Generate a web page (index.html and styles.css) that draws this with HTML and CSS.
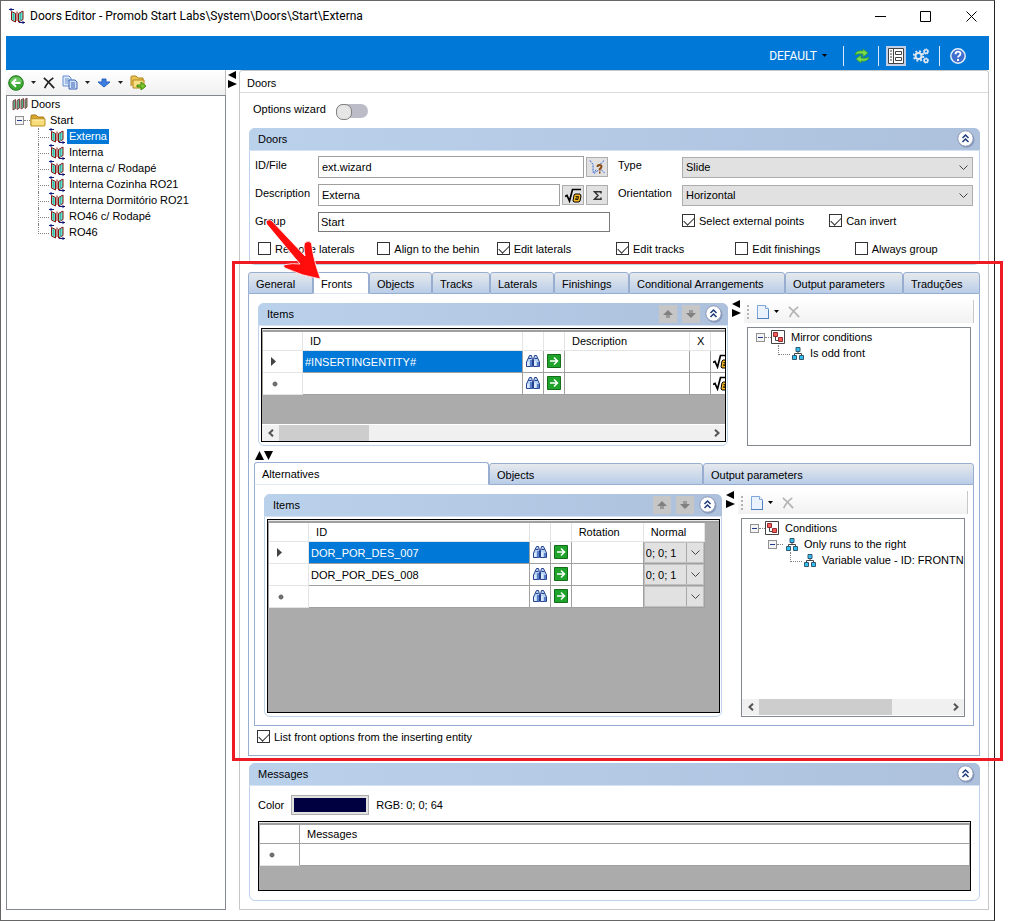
FILE: index.html
```html
<!DOCTYPE html>
<html lang="en">
<head>
<meta charset="utf-8">
<title>Doors Editor</title>
<link rel="stylesheet" href="styles.css">
</head>
<body>
<svg class="defs" aria-hidden="true">
  <symbol id="i-door" viewBox="0 0 16 16">
    <path d="M2.500 3.500l4 2v8.500l-4-2z" fill="#5fe6c0" stroke="#8c1414"/><path d="M9.500 5.500l4.500-2.500v8.500l-4.500 2.500z" fill="#5fe6c0" stroke="#8c1414"/>
    <path d="M8 3.500v9.500" stroke="#8c1414"/><path d="M4.500 5.500v7M11.500 5v8" stroke="#4aa9b8"/>
    <path d="M0 1.500h5M2 0v3M10 14.500h6M14 13v3" fill="none" stroke="#101878"/>
  </symbol>
  <symbol id="i-doors" viewBox="0 0 16 16">
    <path d="M1 5l2.500-1.500v9L1 14zM5 4.500l2.500-1.500v9L5 13.500zM9 4l2.500-1.500v9L9 13zM13 3.500l2-1.500v9l-2 1.500z" fill="#4fb090" stroke="#8a4444"/>
  </symbol>
  <symbol id="i-folder" viewBox="0 0 16 16">
    <path d="M1 13V4q0-1 1-1h4l2 2h5q1 0 1 1v2" fill="#d9a62e" stroke="#a67a14"/><path d="M1 14V6l2 1h12v6q0 1-1 1z" fill="#f7dc7a" stroke="#b98f22"/><path d="M3 8h11" stroke="#fff3b8"/>
  </symbol>
  <symbol id="i-back" viewBox="0 0 16 16">
    <circle cx="8" cy="8" r="7.300" fill="#3aa832" stroke="#1f7a1b"/><path d="M2 7a6 5 0 0 1 12 0q-6 1-12 0z" fill="#8fd980" opacity=".6"/><path d="M12.500 8H4.500M8 4.200L4.200 8 8 11.800" fill="none" stroke="#fff" stroke-width="2"/>
  </symbol>
  <symbol id="i-x" viewBox="0 0 14 14"><path d="M1 1q6 5 12 12M12 1Q5 6 2 13" fill="none" stroke="currentColor" stroke-width="2"/></symbol>
  <symbol id="i-copy" viewBox="0 0 16 16">
    <path d="M1 1h6l2 2v8H1z" fill="#dbe8fa" stroke="#6b8fd0"/><path d="M3 4h4M3 6h4M3 8h3" stroke="#6b8fd0"/><path d="M7 5h6l2 2v7H7z" fill="#cfe0f8" stroke="#3c64b4"/><path d="M9 8h4M9 10h4M9 12h4" stroke="#3c64b4"/>
  </symbol>
  <symbol id="i-down" viewBox="0 0 14 10"><path d="M5 1h4v3h4L7 9 1 4h4z" fill="#3c7fe0" stroke="#2a62c0"/></symbol>
  <symbol id="i-folderout" viewBox="0 0 16 16">
    <path d="M1 11V2q0-1 1-1h4l2 2h5v2" fill="#e8c457" stroke="#b38416"/><path d="M3 13V5h11v8z" fill="#f8df85" stroke="#b38416"/><path d="M7 10h4V7l5 4-5 4v-3H7z" fill="#7cc82c" stroke="#3f8a10"/>
  </symbol>
  <symbol id="i-caret" viewBox="0 0 5 3"><path d="M0 0h5L2.500 3z" fill="currentColor"/></symbol>
  <symbol id="i-lr" viewBox="0 0 9 17"><path d="M8 0v8L0 4zM0 9l9 4-9 4z" fill="#000"/></symbol>
  <symbol id="i-refresh" viewBox="0 0 16 16">
    <path d="M1 7q1-5 8-4V1l5 4-5 4V6Q4 5 1 7z" fill="#7ade4c" stroke="#3a9a28" stroke-width=".8"/><path d="M15 9q-1 5-8 4v2l-5-4 5-4v3q5 1 8-1z" fill="#7ade4c" stroke="#3a9a28" stroke-width=".8"/>
  </symbol>
  <symbol id="i-form" viewBox="0 0 16 16">
    <path d="M.5.500h15v15H.500z" fill="#fff" stroke="#444"/><path d="M5.500 0v16M2 3h2M2 6h2M2 9h2M2 12h2" stroke="#444"/><path d="M7.500 3.500h6v3h-6zM7.500 9.500h6v3h-6z" fill="#fff" stroke="#444"/>
  </symbol>
  <symbol id="i-gears" viewBox="0 0 16 16">
    <circle cx="5.500" cy="8" r="3" fill="none" stroke="#dfe8f2" stroke-width="2"/><circle cx="5.500" cy="8" r="4.800" fill="none" stroke="#dfe8f2" stroke-width="2" stroke-dasharray="1.900 1.870"/>
    <circle cx="13" cy="3.500" r="1.800" fill="none" stroke="#dfe8f2" stroke-width="1.500" /><circle cx="13" cy="3.500" r="2.700" fill="none" stroke="#dfe8f2" stroke-dasharray="1 1.100"/>
    <circle cx="13" cy="12.500" r="1.800" fill="none" stroke="#dfe8f2" stroke-width="1.500"/><circle cx="13" cy="12.500" r="2.700" fill="none" stroke="#dfe8f2" stroke-dasharray="1 1.100"/>
  </symbol>
  <symbol id="i-help" viewBox="0 0 16 16">
    <circle cx="8" cy="8" r="7.200" fill="#3f6fd0" stroke="#e8eefa" stroke-width="1.500"/><path d="M5.500 6.200q0-2.600 2.500-2.600t2.500 2.200q0 1.200-1.300 2Q8 8.500 8 9.600" fill="none" stroke="#fff" stroke-width="1.800"/><path d="M7 11h2v2H7z" fill="#fff"/>
  </symbol>
  <symbol id="i-up2" viewBox="0 0 18 18">
    <circle cx="9.500" cy="9.800" r="8" fill="#6f7fa8" opacity=".6"/><circle cx="8.500" cy="8.500" r="7.700" fill="#fff" stroke="#8a96b4"/><path d="M5.500 8l3-3 3 3M5.500 12l3-3 3 3" fill="none" stroke="#1d3a78" stroke-width="1.500"/>
  </symbol>
  <symbol id="i-au" viewBox="0 0 12 8"><path d="M6 0l5 5H8v3H4V5H1z" fill="#808080"/><path d="M4 5h4v3H4z" fill="#999"/></symbol>
  <symbol id="i-ad" viewBox="0 0 12 8"><path d="M4 0h4v3h3L6 8 1 3h3z" fill="#808080"/><path d="M4 0h4v3H4z" fill="#999"/></symbol>
  <symbol id="i-chev" viewBox="0 0 9 5"><path d="M.5.500l4 4 4-4" fill="none" stroke="#444"/></symbol>
  <symbol id="i-bino" viewBox="0 0 16 14">
    <path d="M4.500 1.500h2l1 4v7h-6V8zM9.500 1.500h2l3 6.500v4.500h-6v-7z" fill="#b9d3f5" stroke="#24408e"/><path d="M3.500 4.500h3M9.500 4.500h3M7 6h2" stroke="#24408e"/><path d="M6 6v7M13 8v5" stroke="#3c64b8" stroke-width="1.500"/><path d="M3 8v4M10 7v5" stroke="#fff"/>
  </symbol>
  <symbol id="i-go" viewBox="0 0 14 14">
    <path d="M.5.500h13v13H.500z" fill="#1fa32a" stroke="#146c1a"/><path d="M3 7h7.500M7 3.500L10.500 7 7 10.500" fill="none" stroke="#fff" stroke-width="1.500"/>
  </symbol>
  <symbol id="i-sqrt" viewBox="0 0 17 15">
    <path d="M0 8.500l2-1L4.500 13 7.500 1.500H16" fill="none" stroke="#000" stroke-width="1.700"/><path d="M8 13l1-6 1-1h5l1 2-1 5-1 1H9z" fill="#f5b820" stroke="#000"/><path d="M10.500 8.500h3l-.5 3h-2.500l.5-1.500h2" fill="none" stroke="#000" stroke-width=".8"/>
  </symbol>
  <symbol id="i-wire" viewBox="0 0 16 15">
    <path d="M1 1l3 4v8l4-3M15 1l-4 4" fill="none" stroke="#2f62d8" stroke-dasharray="2 1"/><path d="M12 10l4 4M9 11l-4 3" stroke="#2f62d8" stroke-dasharray="2 1"/><path d="M8.500 7.500q0-2 2-2t2 1.500-1.800 2.500v1.500M10 13h1.500" fill="none" stroke="#8a4a12" stroke-width="2"/>
  </symbol>
  <symbol id="i-sigma" viewBox="0 0 9 9"><path d="M8 2.500V.800H1.500L5 4.500 1.500 8.200H8V6.500" fill="none" stroke="#333" stroke-width="1.500"/></symbol>
  <symbol id="i-new" viewBox="0 0 12 14"><path d="M.5.500h8l3 3v10H.500z" fill="#eaf3fd" stroke="#7fa6d8"/><path d="M8.500.500v3h3" fill="#fff" stroke="#7fa6d8"/><path d="M0 13.500h12M11.500 5v9" stroke="#4f80c0"/></symbol>
  <symbol id="i-cond" viewBox="0 0 14 14">
    <path d="M.5.500h13v13H.500z" fill="#fff" stroke="#444"/><path d="M4.500 6v4.500H8" fill="none" stroke="#444"/><path d="M2.500 2.500h4v4h-4zM7.500 7.500h4v4h-4z" fill="#ff5a5a" stroke="#8c2c2c"/>
  </symbol>
  <symbol id="i-net" viewBox="0 0 12 13">
    <path d="M6 4v3M2.500 9V6.500h7V9" fill="none" stroke="#444"/><path d="M4 .500h4v4H4zM.5 8.500h4v4h-4zM7.500 8.500h4v4h-4z" fill="#2fc0f4" stroke="#35566a"/>
  </symbol>
  <symbol id="i-left" viewBox="0 0 6 8"><path d="M5 .700L1.500 4 5 7.300" fill="none" stroke="#555" stroke-width="2"/></symbol>
  <symbol id="i-right" viewBox="0 0 6 8"><path d="M1 .700L4.500 4 1 7.300" fill="none" stroke="#555" stroke-width="2"/></symbol>
  <symbol id="i-cur" viewBox="0 0 5 9"><path d="M0 0l5 4.500L0 9z" fill="#444"/></symbol>
  <symbol id="i-star" viewBox="0 0 6 6"><circle cx="3" cy="3" r="2" fill="#444"/><path d="M3 0v6M0 3h6M1 1l4 4M5 1L1 5" stroke="#777" stroke-width=".8"/></symbol>
</svg>

<div class="stage">
<div class="window">
  <header class="titlebar">
    <svg class="s16"><use href="#i-door"/></svg>
    <h1>Doors Editor - Promob Start Labs\System\Doors\Start\Externa</h1>
    <button class="winbtn" aria-label="Minimize"><svg width="11" height="11"><path d="M0 5.500h11" stroke="#000"/></svg></button>
    <button class="winbtn" aria-label="Maximize"><svg width="11" height="11"><path d="M.5.500h10v10H.500z" fill="none" stroke="#000"/></svg></button>
    <button class="winbtn" aria-label="Close"><svg width="11" height="11"><path d="M.5.500l10 10M10.500.500l-10 10" stroke="#000"/></svg></button>
  </header>
  <div class="ribbon">
    <button class="profile">DEFAULT <svg class="caret"><use href="#i-caret"/></svg></button>
    <span class="sep"></span>
    <button class="plain refresh" aria-label="Refresh"><svg class="s16"><use href="#i-refresh"/></svg></button>
    <span class="sep"></span>
    <button class="plain boxed" aria-label="Form view"><svg class="s16"><use href="#i-form"/></svg></button>
    <button class="plain gears" aria-label="Settings"><svg class="s16"><use href="#i-gears"/></svg></button>
    <span class="sep"></span>
    <button class="plain help" aria-label="Help"><svg class="s16"><use href="#i-help"/></svg></button>
  </div>
  <div class="work">
    <aside class="side">
      <div class="sidebar-tools">
        <button class="plain" aria-label="Add"><svg class="s16"><use href="#i-back"/></svg></button>
        <svg class="caret"><use href="#i-caret"/></svg>
        <button class="plain" aria-label="Delete"><svg class="s12"><use href="#i-x"/></svg></button>
        <button class="plain" aria-label="Copy"><svg class="s16"><use href="#i-copy"/></svg></button>
        <svg class="caret"><use href="#i-caret"/></svg>
        <button class="plain" aria-label="Move down"><svg class="down"><use href="#i-down"/></svg></button>
        <svg class="caret"><use href="#i-caret"/></svg>
        <button class="plain" aria-label="Export"><svg class="s16"><use href="#i-folderout"/></svg></button>
      </div>
      <div class="treebox">
        <ul class="tree">
          <li><div class="node"><svg class="s16"><use href="#i-doors"/></svg><span>Doors</span></div>
            <ul class="level-start">
              <li><div class="node"><button class="expander" aria-label="Collapse"></button><i class="dots"></i><svg class="s16"><use href="#i-folder"/></svg><span>Start</span></div>
                <ul class="leaves">
                  <li><svg class="s16"><use href="#i-door"/></svg><span class="selected">Externa</span></li>
                  <li><svg class="s16"><use href="#i-door"/></svg><span>Interna</span></li>
                  <li><svg class="s16"><use href="#i-door"/></svg><span>Interna c/ Rodapé</span></li>
                  <li><svg class="s16"><use href="#i-door"/></svg><span>Interna Cozinha RO21</span></li>
                  <li><svg class="s16"><use href="#i-door"/></svg><span>Interna Dormitório RO21</span></li>
                  <li><svg class="s16"><use href="#i-door"/></svg><span>RO46 c/ Rodapé</span></li>
                  <li><svg class="s16"><use href="#i-door"/></svg><span>RO46</span></li>
                </ul>
              </li>
            </ul>
          </li>
        </ul>
      </div>
    </aside>
    <div class="splitter"><svg class="lr"><use href="#i-lr"/></svg></div>
    <main class="editor">
      <h2 class="editor-title">Doors</h2>
      <div class="editor-body">
        <div class="wizard"><label for="wizard">Options wizard</label><input id="wizard" class="switch" type="checkbox" role="switch"></div>

        <section class="group">
          <div class="group-head"><h3>Doors</h3><button class="plain" aria-label="Collapse"><svg class="s18"><use href="#i-up2"/></svg></button></div>
          <div class="door-form">
            <div class="form-col left">
              <label for="idfile">ID/File</label>
              <div class="field"><input id="idfile" type="text" value="ext.wizard"><button class="tool" aria-label="Pick file"><svg class="s16"><use href="#i-wire"/></svg></button></div>
              <label for="desc">Description</label>
              <div class="field"><input id="desc" type="text" value="Externa"><button class="tool" aria-label="Formula"><svg class="sqrt"><use href="#i-sqrt"/></svg></button><button class="tool" aria-label="Sum"><svg class="s9"><use href="#i-sigma"/></svg></button></div>
              <label for="grp">Group</label>
              <div class="field wide"><input id="grp" class="dark" type="text" value="Start"></div>
            </div>
            <div class="form-col right">
              <label for="type">Type</label>
              <div class="combo"><select id="type"><option>Slide</option></select><svg class="chev"><use href="#i-chev"/></svg></div>
              <label for="orient">Orientation</label>
              <div class="combo"><select id="orient"><option>Horizontal</option></select><svg class="chev"><use href="#i-chev"/></svg></div>
              <div class="pair"><label class="check"><input type="checkbox" checked>Select external points</label><label class="check"><input type="checkbox" checked>Can invert</label></div>
            </div>
          </div>
          <div class="checks">
            <label class="check"><input type="checkbox">Remove laterals</label>
            <label class="check"><input type="checkbox">Align to the behin</label>
            <label class="check"><input type="checkbox" checked>Edit laterals</label>
            <label class="check"><input type="checkbox" checked>Edit tracks</label>
            <label class="check"><input type="checkbox">Edit finishings</label>
            <label class="check"><input type="checkbox">Always group</label>
          </div>
        </section>

        <section class="tabs-area">
          <div class="tabs main-tabs" role="tablist">
            <button role="tab">General</button><button role="tab" aria-selected="true">Fronts</button><button role="tab">Objects</button><button role="tab">Tracks</button><button role="tab">Laterals</button><button role="tab">Finishings</button><button role="tab">Conditional Arrangements</button><button role="tab">Output parameters</button><button role="tab">Traduções</button>
          </div>
          <div class="panel">
            <div class="split">
              <section class="group items">
                <div class="group-head"><h3>Items</h3><button class="move" aria-label="Move up"><svg class="arr"><use href="#i-au"/></svg></button><button class="move" aria-label="Move down"><svg class="arr"><use href="#i-ad"/></svg></button><button class="plain" aria-label="Collapse"><svg class="s18"><use href="#i-up2"/></svg></button></div>
                <div class="datagrid short">
                  <table class="fronts">
                    <colgroup><col class="c-row"><col class="c-id"><col class="c-icon"><col class="c-icon"><col class="c-desc"><col class="c-icon"><col class="c-last"></colgroup>
                    <thead><tr><th></th><th>ID</th><th></th><th></th><th>Description</th><th>X</th><th></th></tr></thead>
                    <tbody>
                      <tr><td><svg class="cur"><use href="#i-cur"/></svg></td><td class="on">#INSERTINGENTITY#</td><td><svg class="bino"><use href="#i-bino"/></svg></td><td><svg class="s14"><use href="#i-go"/></svg></td><td></td><td></td><td><svg class="sqrt"><use href="#i-sqrt"/></svg></td></tr>
                      <tr><td><svg class="star"><use href="#i-star"/></svg></td><td></td><td><svg class="bino"><use href="#i-bino"/></svg></td><td><svg class="s14"><use href="#i-go"/></svg></td><td></td><td></td><td><svg class="sqrt"><use href="#i-sqrt"/></svg></td></tr>
                    </tbody>
                  </table>
                  <div class="hscroll"><button aria-label="Scroll left"><svg class="sa"><use href="#i-left"/></svg></button><span class="track"><i class="thumb fifth"></i></span><button aria-label="Scroll right"><svg class="sa"><use href="#i-right"/></svg></button></div>
                </div>
              </section>
              <svg class="lr"><use href="#i-lr"/></svg>
              <div class="cond">
                <div class="cond-tools"><i class="grip"></i><button class="plain" aria-label="New"><svg class="new"><use href="#i-new"/></svg></button><svg class="caret"><use href="#i-caret"/></svg><button class="plain off" aria-label="Delete"><svg class="s12"><use href="#i-x"/></svg></button></div>
                <div class="condbox">
                  <ul class="ctree">
                    <li><div class="node"><button class="expander" aria-label="Collapse"></button><i class="dots"></i><svg class="s14"><use href="#i-cond"/></svg><span>Mirror conditions</span></div>
                      <ul><li class="leaf"><svg class="net"><use href="#i-net"/></svg><span>Is odd front</span></li></ul>
                    </li>
                  </ul>
                </div>
              </div>
            </div>
            <svg class="ud"><path d="M0 9l4.500-9L9 9zM9 0h9l-4.500 9z"/></svg>

            <div class="nested">
              <div class="tabs sub-tabs" role="tablist">
                <button role="tab" aria-selected="true">Alternatives</button><button role="tab">Objects</button><button role="tab">Output parameters</button>
              </div>
              <div class="panel">
                <div class="split">
                  <section class="group items">
                    <div class="group-head"><h3>Items</h3><button class="move" aria-label="Move up"><svg class="arr"><use href="#i-au"/></svg></button><button class="move" aria-label="Move down"><svg class="arr"><use href="#i-ad"/></svg></button><button class="plain" aria-label="Collapse"><svg class="s18"><use href="#i-up2"/></svg></button></div>
                    <div class="datagrid tall">
                      <table class="alts">
                        <colgroup><col class="c-row"><col class="c-id"><col class="c-icon"><col class="c-icon"><col class="c-rot"><col class="c-norm"></colgroup>
                        <thead><tr><th></th><th>ID</th><th></th><th></th><th>Rotation</th><th>Normal</th></tr></thead>
                        <tbody>
                          <tr><td><svg class="cur"><use href="#i-cur"/></svg></td><td class="on">DOR_POR_DES_007</td><td><svg class="bino"><use href="#i-bino"/></svg></td><td><svg class="s14"><use href="#i-go"/></svg></td><td></td><td class="pick"><div class="combo"><select aria-label="Normal"><option>0; 0; 1</option></select><svg class="chev"><use href="#i-chev"/></svg></div></td></tr>
                          <tr><td></td><td>DOR_POR_DES_008</td><td><svg class="bino"><use href="#i-bino"/></svg></td><td><svg class="s14"><use href="#i-go"/></svg></td><td></td><td class="pick"><div class="combo"><select aria-label="Normal"><option>0; 0; 1</option></select><svg class="chev"><use href="#i-chev"/></svg></div></td></tr>
                          <tr><td><svg class="star"><use href="#i-star"/></svg></td><td></td><td><svg class="bino"><use href="#i-bino"/></svg></td><td><svg class="s14"><use href="#i-go"/></svg></td><td></td><td class="pick"><div class="combo"><select aria-label="Normal"><option></option></select><svg class="chev"><use href="#i-chev"/></svg></div></td></tr>
                        </tbody>
                      </table>
                    </div>
                  </section>
                  <svg class="lr"><use href="#i-lr"/></svg>
                  <div class="cond">
                    <div class="cond-tools"><i class="grip"></i><button class="plain" aria-label="New"><svg class="new"><use href="#i-new"/></svg></button><svg class="caret"><use href="#i-caret"/></svg><button class="plain off" aria-label="Delete"><svg class="s12"><use href="#i-x"/></svg></button></div>
                    <div class="condbox">
                      <ul class="ctree">
                        <li><div class="node"><button class="expander" aria-label="Collapse"></button><i class="dots"></i><svg class="s14"><use href="#i-cond"/></svg><span>Conditions</span></div>
                          <ul>
                            <li><div class="node"><button class="expander" aria-label="Collapse"></button><i class="dots"></i><svg class="net"><use href="#i-net"/></svg><span>Only runs to the right</span></div>
                              <ul><li class="leaf"><svg class="net"><use href="#i-net"/></svg><span>Variable value - ID: FRONTN</span></li></ul>
                            </li>
                          </ul>
                        </li>
                      </ul>
                      <div class="hscroll"><button aria-label="Scroll left"><svg class="sa"><use href="#i-left"/></svg></button><span class="track"><i class="thumb most"></i></span><button aria-label="Scroll right"><svg class="sa"><use href="#i-right"/></svg></button></div>
                    </div>
                  </div>
                </div>
              </div>
            </div>
            <label class="check list-front"><input type="checkbox" checked>List front options from the inserting entity</label>
          </div>
          <div class="highlight"></div>
          <svg class="pointer" viewBox="0 0 70 70"><path d="M10 7L43 42Q41 30 43 28.500 47 26 49.500 29 51 45 58.500 65 40 62 23 54 20 51 24 50.500 30 49 38 50L5 10.500Q3 7 6 6 8 5 10 7z" fill="#ff0d0d" stroke="#fff" stroke-width=".8"/></svg>
        </section>

        <section class="group">
          <div class="group-head"><h3>Messages</h3><button class="plain" aria-label="Collapse"><svg class="s18"><use href="#i-up2"/></svg></button></div>
          <div class="color-row"><label for="color">Color</label><button id="color" class="swatch" aria-label="Color"></button><span>RGB: 0; 0; 64</span></div>
          <div class="datagrid messages">
            <table>
              <colgroup><col class="c-row"><col></colgroup>
              <thead><tr><th></th><th>Messages</th></tr></thead>
              <tbody><tr><td><svg class="star"><use href="#i-star"/></svg></td><td></td></tr></tbody>
            </table>
          </div>
        </section>
      </div>
    </main>
  </div>
</div>
</div>
</body>
</html>
```

FILE: styles.css
```css
* { box-sizing: border-box; }
body { margin: 0; background: #fff; color: #000; font: 11px/16px "Liberation Sans", Arial, sans-serif; }
button, input, select { font: inherit; color: inherit; margin: 0; }
button { padding: 0; border: 0; background: none; }
h1, h2, h3 { margin: 0; font-size: inherit; font-weight: normal; }
ul { list-style: none; margin: 0; padding: 0; }
svg { display: block; flex: none; }
.defs { position: absolute; width: 0; height: 0; }
.s9 { width: 9px; height: 9px; }
.s12 { width: 12px; height: 12px; }
.s14 { width: 14px; height: 14px; }
.s16 { width: 16px; height: 16px; }
.s18 { width: 18px; height: 18px; }
.sqrt { width: 17px; height: 15px; }
.caret { width: 5px; height: 3px; }
.lr { width: 9px; height: 17px; }
.plain { display: flex; }

.stage { padding-right: 14px; }
.window { display: flex; flex-direction: column; min-height: 100vh; border: 1px solid #666; border-right-color: #222; padding: 0 5px 10px; }

.titlebar { display: flex; align-items: center; height: 35px; margin-right: -5px; padding: 0 0 5px 3px; }
.titlebar h1 { flex: 1; margin-left: 5px; font: 12px/16px Roboto, "Open Sans", sans-serif; white-space: nowrap; }
.winbtn { display: flex; justify-content: center; width: 46px; }
.titlebar .winbtn:nth-of-type(2) { width: 45px; }

.ribbon { display: flex; align-items: center; justify-content: flex-end; height: 34px; padding: 5px 23px 0 0; background: #0078d7; }
.profile { display: flex; align-items: center; gap: 5px; margin-right: 16px; color: #fff; font: 12px/16px Roboto, "Open Sans", sans-serif; }
.profile .caret { color: #000; }
.sep { width: 1px; height: 20px; background: #d6e8fa; }
.refresh { margin: 0 8px 0 10px; }
.boxed { margin: 0 7px; padding: 2px; background: #c3cfe6; }
.gears { margin-right: 10px; }
.help { margin-left: 10px; }

.work { flex: 1; display: grid; grid-template-columns: 220px 13px minmax(0, 1fr); }
.side { display: flex; flex-direction: column; }
.sidebar-tools { display: flex; align-items: center; gap: 7px; height: 25px; padding-left: 2px; background: linear-gradient(#fff, #f0f0f0); border-right: 1px solid #bbb; color: #222; }
.down { width: 14px; height: 10px; }
.treebox { flex: 1; border: 1px solid #828790; }
.splitter { padding: 1px 2px; }

.tree .node, .leaves li { display: flex; align-items: center; height: 16px; white-space: nowrap; }
.tree .node { padding-left: 5px; gap: 3px; }
.tree .level-start .node { padding-left: 8px; gap: 0; }
.level-start .node .s16 { margin-right: 4px; }
.dots { width: 6px; border-top: 1px dotted #808080; }
.expander { width: 9px; height: 9px; border: 1px solid #919191; background: linear-gradient(#25398c, #25398c) center / 5px 1px no-repeat, #f4f4f4; flex: none; }
.leaves li { position: relative; padding-left: 42px; gap: 2px; }
.leaves li::before { content: ""; position: absolute; left: 31px; top: 0; width: 10px; height: 9px; border: dotted #808080; border-width: 0 0 1px 1px; }
.leaves li:not(:last-child)::after { content: ""; position: absolute; left: 31px; top: 9px; height: 7px; border-left: 1px dotted #808080; }
.leaves span { padding: 0 2px; line-height: 15px; }
.selected { background: #0078d7; color: #fff; }

.editor { border: 1px solid #c6c6c6; border-radius: 3px 3px 0 0; }
.editor-title { height: 22px; padding: 4px 7px 0; border-bottom: 1px solid #dcdcdc; }
.editor-body { display: flex; flex-direction: column; gap: 7px; padding: 0 8px 8px 9px; }
.wizard { display: flex; align-items: center; gap: 10px; height: 28px; padding: 4px 0 0 4px; }
.switch { appearance: none; width: 32px; height: 14px; margin-top: 4px; border-radius: 7px; background: #bcbcc8; }
.switch::before { content: ""; display: block; width: 14px; height: 14px; border: 1px solid #808080; border-radius: 7px; background: #e6e6e6; }

.group { border: 1px solid #bdd3ec; border-radius: 6px; }
.group-head { display: flex; align-items: center; gap: 5px; height: 23px; padding: 0 5px 0 9px; margin: -1px -1px 0; border-bottom: 1px solid #d4e2f3; border-radius: 6px 6px 0 0; background: linear-gradient(90deg, #bad1ec, #adc1dd); }
.group-head h3 { flex: 1; }
.door-form { display: grid; grid-template-columns: 1fr 1fr; gap: 8px; padding: 5px 6px 0 5px; }
.form-col { display: grid; grid-template-rows: 22px 22px 20px; row-gap: 6px; align-items: center; }
.form-col > label { align-self: start; line-height: 18px; }
.left { grid-template-columns: 63px minmax(0, 1fr); }
.right { grid-template-columns: 64px minmax(0, 1fr); }
.field { display: flex; gap: 1px; padding-right: 2px; }
.field.wide { padding-right: 0; }
.field input { flex: 1; min-width: 0; height: 22px; padding: 0 3px; border: 1px solid #a0a0a0; background: #fff; }
.field input.dark { height: 20px; padding: 0 2px; border-color: #7a7a7a; }
.tool { display: flex; align-items: center; justify-content: center; width: 22px; height: 20px; margin: 1px 0 1px 1px; border: 1px solid #adadad; background: #e1e1e1; }
.combo { display: grid; grid-template-columns: minmax(0, 1fr) 17px; align-items: center; }
.combo select { grid-area: 1 / 1 / 2 / 3; appearance: none; width: 100%; height: 21px; padding: 0 3px; border: 1px solid #adadad; border-radius: 0; background: #e1e1e1; }
.chev { grid-area: 1 / 2; width: 9px; height: 5px; margin-left: 3px; pointer-events: none; }
.pair { grid-column: 2; display: flex; gap: 25px; padding-bottom: 3px; }
.check { display: flex; align-items: center; gap: 4px; height: 13px; white-space: nowrap; }
.check input { appearance: none; flex: none; width: 13px; height: 13px; border: 1px solid #333; background: #fff; }
.check input:checked::before { content: ""; display: block; width: 9px; height: 5px; margin: 2px 1px; border: solid #333; border-width: 0 0 1px 1px; transform: rotate(-45deg); }
.checks { display: grid; grid-template-columns: repeat(6, 1fr); padding: 10px 5px 9px 8px; }

.tabs-area { position: relative; margin-left: -1px; }
.tabs { display: grid; align-items: end; }
.main-tabs { grid-template-columns: 65fr 56fr 63fr 58fr 64fr 75fr 156fr 118fr 77fr; height: 22px; }
.sub-tabs { grid-template-columns: 235fr 214fr 271fr; height: 23px; }
.tabs button { height: 22px; padding: 1px 0 0 7px; border: 1px solid #97aed0; border-radius: 3px 3px 0 0; background: linear-gradient(#e6e9ed, #b9cde8); text-align: left; white-space: nowrap; }
.tabs button[aria-selected] { background: #fff; border-bottom-color: #dfe9f6; }
.sub-tabs button[aria-selected] { height: 23px; }
.panel { border: solid #97aed0; border-width: 0 1px 1px; padding-bottom: 12px; }
.split { display: grid; grid-template-columns: minmax(0, 470fr) 16px minmax(0, 230fr); padding: 6px 5px 0 9px; }
.nested .split { grid-template-columns: minmax(0, 458fr) 16px minmax(0, 230fr); }
.nested { margin: 2px 5px 0; }
.nested .panel { padding-bottom: 8px; }
.split .lr { justify-self: center; }
.items { margin-top: 3px; }
.move { display: flex; align-items: center; justify-content: center; width: 18px; height: 18px; background: #c6c6c6; }
.arr { width: 12px; height: 8px; }
.ud { width: 18px; height: 9px; margin: 5px 0 0 6px; }

.datagrid { display: flex; flex-direction: column; margin: 2px 1px 3px 2px; overflow: hidden; border: 1px solid #000; background: #ababab; }
.datagrid::before { content: ""; flex: none; height: 2px; border-top: 1px solid #e8e8e8; background: #a0a0a0; }
.short { height: 114px; }
.tall { height: 194px; }
.messages { height: 70px; margin: 6px 8px 9px; }
table { table-layout: fixed; border-spacing: 0; width: 100%; background: #fff; border-left: 1px solid #a0a0a0; }
.fronts { width: 480px; }
.alts { width: 437px; }
.c-row { width: 40px; }
.c-id { width: 220px; }
.c-icon { width: 21px; }
.c-desc { width: 125px; }
.c-last { width: 31px; }
.c-rot { width: 72px; }
.c-norm { width: 61px; }
th, td { padding: 0 2px; text-align: left; font-weight: normal; white-space: nowrap; border: solid #a0a0a0; border-width: 0 1px 1px 0; }
th { height: 19px; padding: 0 7px; border-color: #e4e4e4; }
td { height: 22px; }
td:first-child { padding-left: 8px; border-color: #e4e4e4; }
.messages th { border-color: #a0a0a0; }
.messages td:first-child { border-right-color: #a0a0a0; }
td.on { background: #0078d7; color: #fff; }
td .s14 { margin: 0 auto 2px; }
td.pick { padding: 0; }
.pick .combo { grid-template-columns: minmax(0, 1fr) 18px; }
.pick select { height: 21px; padding: 0 1px; border-color: #c0c0c0; }
.pick .combo::after { content: ""; grid-area: 1 / 2; height: 19px; border-left: 1px solid #a8a8a8; pointer-events: none; }
.pick .chev { margin-left: 5px; }
.bino { width: 16px; height: 14px; margin: 0 auto 2px; }
.cur { width: 5px; height: 9px; }
.star { width: 6px; height: 6px; margin-left: 1px; }

.hscroll { display: flex; height: 17px; margin-top: auto; background: #f0f0f0; flex: none; border-top: 1px solid #fff; }
.hscroll button { display: flex; align-items: center; justify-content: center; width: 17px; }
.sa { width: 6px; height: 8px; }
.track { flex: 1; display: flex; }
.thumb { background: #cdcdcd; }
.fifth { width: 21%; }
.most { width: 71%; }

.cond { display: flex; flex-direction: column; }
.cond-tools { display: flex; align-items: center; height: 23px; margin-bottom: 4px; background: linear-gradient(#fefefe, #f2f2f2); border-right: 1px solid #c8c8c8; }
.grip { width: 2px; height: 14px; margin: 0 8px 0 3px; background: repeating-linear-gradient(#b4b4b4 0 2px, transparent 2px 4px); }
.new { width: 12px; height: 14px; margin-right: 5px; }
.off { color: #b4b4b4; margin-left: 9px; }
.condbox { flex: 1; display: flex; flex-direction: column; margin: 0 3px; padding: 1px 0; border: 1px solid #828790; overflow: hidden; }
.ctree { padding: 0 0 0 8px; white-space: nowrap; }
.ctree .node, .leaf { display: flex; align-items: center; height: 16px; }
.ctree span { margin-left: 6px; }
.ctree ul { margin-left: 18px; }
.ctree .net { margin: 0 0 0 3px; }
.ctree .leaf { position: relative; padding-left: 15px; }
.leaf::before { content: ""; position: absolute; left: 4px; top: 0; width: 11px; height: 9px; border: dotted #808080; border-width: 0 0 1px 1px; }
.net { width: 12px; height: 13px; }
.list-front { margin: 5px 8px 0; }
.nested + .list-front { margin-top: 4px; }

.color-row { display: flex; align-items: center; gap: 7px; height: 20px; margin: 9px 8px 0; }
.swatch { width: 78px; height: 20px; border: 1px solid #adadad; background: #000040; box-shadow: inset 0 0 0 2px #e1e1e1; }

.highlight { position: absolute; inset: -11px -23px -5px -16px; border: 3px solid #ed1c24; pointer-events: none; }
.pointer { position: absolute; left: 14px; top: -58px; width: 70px; height: 70px; overflow: visible; pointer-events: none; }
```
